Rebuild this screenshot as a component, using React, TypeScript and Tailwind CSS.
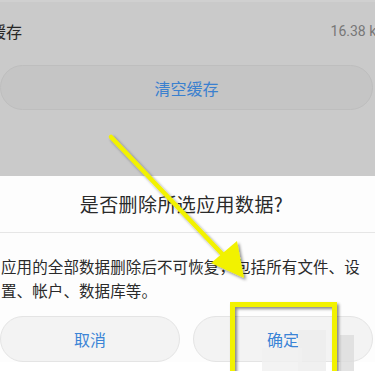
import React from 'react'

const CJK = { fontFamily: '"Noto Sans CJK SC", "Noto Sans", sans-serif' }

export default function App() {
  return (
    <div className="relative w-[375px] h-[371px] overflow-hidden bg-white" style={CJK}>
      {/* dimmed settings page behind the dialog */}
      <div className="h-[176px] bg-[#cacaca] flex flex-col">
        <div className="h-[2px] bg-[#d0d0d0]" />
        <div className="flex items-center justify-between h-[38px] mt-[10px]">
          <span className="ml-[-10px] text-[16px] text-[#262626]">缓存</span>
          <span className="mr-[-10px] text-[14px] text-[#777]" style={{ fontFamily: 'Roboto, "Noto Sans", sans-serif' }}>16.38 kB</span>
        </div>
        <div className="mt-[15px] mr-[2px] h-[45px] rounded-full bg-[#c5c5c5] border border-[#bebebe] flex items-center justify-center">
          <span className="text-[16px] text-[#3a80cf]">清空缓存</span>
        </div>
      </div>

      {/* dialog */}
      <div className="flex flex-col bg-[#fdfdfd]">
        <div className="h-[56px] flex items-center justify-center pr-[12px]">
          <span className="text-[19px] text-[#2a2a2a] tracking-[0.4px]">是否删除所选应用数据?</span>
        </div>
        <div className="h-px bg-[#e6e6e6]" />
        <div className="pt-[21px] pl-[1px] text-[15.5px] leading-[24px] text-[#2a2a2a] tracking-[0.1px]">
          <div>应用的全部数据删除后不可恢复，包括所有文件、设</div>
          <div>置、帐户、数据库等。</div>
        </div>
        <div className="mt-[14px] flex gap-[13px] pr-[2px]">
          <div className="flex-1 h-[46px] rounded-full bg-[#f3f3f3] border border-[#e4e4e4] flex items-center justify-center">
            <span className="text-[16px] text-[#3b84d6]">取消</span>
          </div>
          <div className="flex-1 h-[46px] rounded-full bg-[#f3f3f3] border border-[#e4e4e4] flex items-center justify-center">
            <span className="text-[16px] text-[#3b84d6]">确定</span>
          </div>
        </div>
      </div>

      {/* blotchy watermark near the confirm button */}
      <div className="absolute left-[298px] top-[330px] w-[28px] h-[41px] bg-[#ececec]/80" />
      <div className="absolute left-[262px] top-[348px] w-[40px] h-[23px] bg-[#f0f0f0]/80" />
      <div className="absolute left-[340px] top-[335px] w-[14px] h-[36px] bg-[#dcdcdc]/80" />

      {/* tutorial annotation: arrow + highlight box */}
      <svg className="absolute left-0 top-0" width="375" height="371" viewBox="0 0 375 371">
        <defs>
          <filter id="sh" x="-20%" y="-20%" width="140%" height="140%">
            <feDropShadow dx="2" dy="2" stdDeviation="1.5" floodColor="#000" floodOpacity="0.45" />
          </filter>
        </defs>
        <g filter="url(#sh)">
          <line x1="111" y1="137" x2="226" y2="258" stroke="#f2f200" strokeWidth="4.5" strokeLinecap="round" />
          <polygon points="244,278 211,263 237,241" fill="#f2f200" />
          <rect x="232.5" y="304.5" width="102" height="80" fill="none" stroke="#f2f200" strokeWidth="5" />
        </g>
      </svg>
    </div>
  )
}
